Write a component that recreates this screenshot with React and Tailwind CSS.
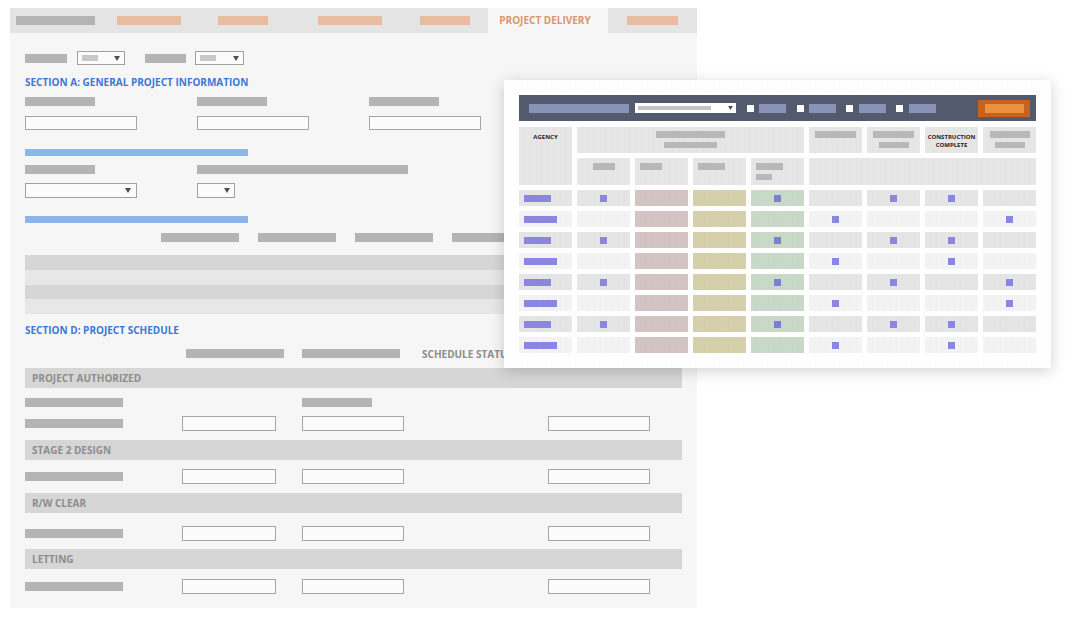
// App.jsx
const tex = "bg-[repeating-linear-gradient(90deg,transparent_0_5px,rgba(0,0,0,0.012)_5px_6px)]";

const Tri = () => (
    <svg width="6" height="5" viewBox="0 0 6 5" className="shrink-0">
        <polygon points="0,0 6,0 3,5" fill="#4b4d5a" />
    </svg>
);

const Input = ({ className = "" }) => (
    <div className={`border border-[#a6a6a6] bg-[#fbfbfb] ${className}`} />
);

const SectionRow = ({ label }) => (
    <div className="flex h-[20px] w-full items-center bg-[#d6d6d6] pl-[7px] text-[10px] font-bold text-[#8d8d8d]">
        {label}
    </div>
);

const ScheduleInputs = ({ className = "" }) => (
    <div className={`flex h-[15px] items-center ${className}`}>
        <div className="h-[9px] w-[98px] bg-[#b4b4b4]" />
        <Input className="ml-[59px] h-[15px] w-[94px]" />
        <Input className="ml-[26px] h-[15px] w-[102px]" />
        <Input className="ml-[144px] h-[15px] w-[102px]" />
    </div>
);

const marks = [
    [2, 5, 7, 8],
    [6, 9],
    [2, 5, 7, 8],
    [6, 8],
    [2, 5, 7, 9],
    [6, 9],
    [2, 5, 7, 8],
    [6, 8],
];

const cellBg = (col, odd) => {
    if (col === 3) return "bg-[#d4c3c3]";
    if (col === 4) return "bg-[#d6cfab]";
    if (col === 5) return "bg-[#c9d9c7]";
    return odd ? "bg-[#e5e5e5]" : "bg-[#f3f3f3]";
};

const DataRow = ({ cols, odd }) => (
    <>
        <div className={`flex h-[16px] items-center ${cellBg(1, odd)} ${tex}`}>
            <div className={`ml-[5px] h-[7px] bg-[#8b86e0] ${odd ? "w-[27px]" : "w-[33px]"}`} />
        </div>
        {[2, 3, 4, 5, 6, 7, 8, 9].map((c) => (
            <div key={c} className={`flex h-[16px] items-center justify-center ${cellBg(c, odd)} ${tex}`}>
                {cols.includes(c) && (
                    <div className={`h-[7px] w-[7px] ${c === 5 ? "bg-[#7d80cf]" : "bg-[#8b86e0]"}`} />
                )}
            </div>
        ))}
    </>
);

const DashboardCard = () => (
    <div className={`absolute left-[504px] top-[80px] w-[547px] bg-white px-[15px] py-[15px] shadow-[0_3px_14px_rgba(0,0,0,0.18)] ${tex}`}>
        {/* toolbar */}
        <div className="flex h-[26px] items-center bg-[#535a6e]">
            <div className="ml-[10px] h-[9px] w-[100px] bg-[#8a92b8]" />
            <div className="ml-[6px] flex h-[10px] w-[101px] items-center bg-white pr-[3px]">
                <div className="ml-[3px] h-[4px] w-[73px] bg-[#c4c4c4]" />
                <div className="ml-auto">
                    <svg width="5" height="4" viewBox="0 0 6 5">
                        <polygon points="0,0 6,0 3,5" fill="#4b4d5a" />
                    </svg>
                </div>
            </div>
            <div className="ml-[11px] h-[7px] w-[7px] bg-white" />
            <div className="ml-[5px] h-[9px] w-[27px] bg-[#8a92b8]" />
            <div className="ml-[11px] h-[7px] w-[7px] bg-white" />
            <div className="ml-[5px] h-[9px] w-[27px] bg-[#8a92b8]" />
            <div className="ml-[10px] h-[7px] w-[7px] bg-white" />
            <div className="ml-[6px] h-[9px] w-[27px] bg-[#8a92b8]" />
            <div className="ml-[10px] h-[7px] w-[7px] bg-white" />
            <div className="ml-[6px] h-[9px] w-[27px] bg-[#8a92b8]" />
            <div className="ml-auto mr-[6px] flex h-[17px] w-[52px] items-center justify-center bg-[#c8611b]">
                <div className="h-[9px] w-[39px] bg-[#ea923f]" />
            </div>
        </div>

        {/* table */}
        <div className="mt-[6px] grid grid-cols-[repeat(9,53px)] gap-[5px]">
            <div className={`row-span-2 bg-[#e6e6e6] pt-[6px] text-center text-[6px] font-bold leading-[8px] text-[#222] ${tex}`}>
                AGENCY
            </div>
            <div className={`col-span-4 flex h-[26px] flex-col items-center gap-[4px] bg-[#e6e6e6] pt-[4px] ${tex}`}>
                <div className="h-[7px] w-[69px] bg-[#b8b8b8]" />
                <div className="h-[6px] w-[53px] bg-[#b8b8b8]" />
            </div>
            <div className={`flex h-[26px] flex-col items-center bg-[#e6e6e6] pt-[4px] ${tex}`}>
                <div className="h-[7px] w-[41px] bg-[#b8b8b8]" />
            </div>
            <div className={`flex h-[26px] flex-col items-center gap-[4px] bg-[#e6e6e6] pt-[4px] ${tex}`}>
                <div className="h-[7px] w-[41px] bg-[#b8b8b8]" />
                <div className="h-[6px] w-[30px] bg-[#b8b8b8]" />
            </div>
            <div className={`h-[26px] bg-[#e6e6e6] pt-[6px] text-center text-[6px] font-bold leading-[8px] text-[#222] ${tex}`}>
                CONSTRUCTION
                <br />
                COMPLETE
            </div>
            <div className={`flex h-[26px] flex-col items-center gap-[4px] bg-[#e6e6e6] pt-[4px] ${tex}`}>
                <div className="h-[7px] w-[40px] bg-[#b8b8b8]" />
                <div className="h-[6px] w-[30px] bg-[#b8b8b8]" />
            </div>

            {/* sub header */}
            <div className={`flex h-[27px] justify-center bg-[#e6e6e6] pt-[5px] ${tex}`}>
                <div className="h-[7px] w-[22px] bg-[#b8b8b8]" />
            </div>
            <div className={`h-[27px] bg-[#e6e6e6] pl-[5px] pt-[5px] ${tex}`}>
                <div className="h-[7px] w-[22px] bg-[#b8b8b8]" />
            </div>
            <div className={`h-[27px] bg-[#e6e6e6] pl-[5px] pt-[5px] ${tex}`}>
                <div className="h-[7px] w-[27px] bg-[#b8b8b8]" />
            </div>
            <div className={`flex h-[27px] flex-col gap-[4px] bg-[#e6e6e6] pl-[5px] pt-[5px] ${tex}`}>
                <div className="h-[7px] w-[27px] bg-[#b8b8b8]" />
                <div className="h-[6px] w-[16px] bg-[#b8b8b8]" />
            </div>
            <div className={`col-span-4 h-[27px] bg-[#e6e6e6] ${tex}`} />

            {marks.map((cols, i) => (
                <DataRow key={i} cols={cols} odd={i % 2 === 0} />
            ))}
        </div>
    </div>
);

export default function App() {
    return (
        <div className="relative min-h-[625px] bg-white font-['Open_Sans',sans-serif]">
            <div className="ml-[10px] w-[687px] pt-[8px]">
                {/* tabs */}
                <div className="flex h-[25px] items-center bg-[#e4e4e4]">
                    <div className="ml-[6px] h-[9px] w-[79px] bg-[#b4b4b4]" />
                    <div className="ml-[22px] h-[9px] w-[64px] bg-[#e8bc9f]" />
                    <div className="ml-[37px] h-[9px] w-[50px] bg-[#e8bc9f]" />
                    <div className="ml-[50px] h-[9px] w-[64px] bg-[#e8bc9f]" />
                    <div className="ml-[38px] h-[9px] w-[50px] bg-[#e8bc9f]" />
                    <div className="ml-[18px] flex h-full w-[120px] items-center justify-center bg-[#f6f6f6] pr-[6px] text-[10px] font-bold text-[#d9966c]">
                        PROJECT DELIVERY
                    </div>
                    <div className="ml-[19px] h-[9px] w-[51px] bg-[#e8bc9f]" />
                </div>

                <div className="bg-[#f6f6f6] px-[15px] pb-[14px] pt-[18px]">
                    {/* filters */}
                    <div className="flex h-[14px] items-center">
                        <div className="h-[9px] w-[42px] bg-[#b4b4b4]" />
                        <div className="ml-[10px] flex h-[14px] w-[48px] items-center border border-[#a0a0a0] bg-[#fbfbfb] pr-[4px]">
                            <div className="ml-[4px] h-[6px] w-[16px] bg-[#c8c8c8]" />
                            <div className="ml-auto"><Tri /></div>
                        </div>
                        <div className="ml-[20px] h-[9px] w-[41px] bg-[#b4b4b4]" />
                        <div className="ml-[9px] flex h-[14px] w-[49px] items-center border border-[#a0a0a0] bg-[#fbfbfb] pr-[4px]">
                            <div className="ml-[4px] h-[6px] w-[16px] bg-[#c8c8c8]" />
                            <div className="ml-auto"><Tri /></div>
                        </div>
                    </div>

                    <h2 className="mt-[11px] text-[10px] font-bold leading-[12px] text-[#3b78d6]">
                        SECTION A: GENERAL PROJECT INFORMATION
                    </h2>

                    <div className="mt-[9px] grid grid-cols-[172px_172px_172px]">
                        <div className="h-[9px] w-[70px] bg-[#b4b4b4]" />
                        <div className="h-[9px] w-[70px] bg-[#b4b4b4]" />
                        <div className="h-[9px] w-[70px] bg-[#b4b4b4]" />
                    </div>
                    <div className="mt-[10px] grid grid-cols-[172px_172px_172px]">
                        <Input className="h-[14px] w-[112px]" />
                        <Input className="h-[14px] w-[112px]" />
                        <Input className="h-[14px] w-[112px]" />
                    </div>

                    <div className="mt-[19px] h-[7px] w-[223px] bg-[#8db5eb]" />

                    <div className="mt-[9px] grid grid-cols-[172px_auto]">
                        <div className="h-[9px] w-[70px] bg-[#b4b4b4]" />
                        <div className="h-[9px] w-[211px] bg-[#b4b4b4]" />
                    </div>
                    <div className="mt-[9px] grid grid-cols-[172px_auto]">
                        <div className="flex h-[15px] w-[112px] items-center justify-end border border-[#a0a0a0] bg-[#fbfbfb] pr-[5px]">
                            <Tri />
                        </div>
                        <div className="flex h-[15px] w-[38px] items-center justify-end border border-[#a0a0a0] bg-[#fbfbfb] pr-[4px]">
                            <Tri />
                        </div>
                    </div>

                    <div className="mt-[18px] h-[7px] w-[223px] bg-[#8db5eb]" />

                    <div className="mt-[10px] flex h-[9px] gap-[19px] pl-[136px]">
                        <div className="h-[9px] w-[78px] bg-[#b4b4b4]" />
                        <div className="h-[9px] w-[78px] bg-[#b4b4b4]" />
                        <div className="h-[9px] w-[78px] bg-[#b4b4b4]" />
                        <div className="h-[9px] w-[78px] bg-[#b4b4b4]" />
                    </div>

                    <div className="mt-[13px]">
                        <div className="h-[15px] bg-[#d6d6d6]" />
                        <div className="h-[15px] bg-[#e7e7e7]" />
                        <div className="h-[14px] bg-[#d6d6d6]" />
                        <div className="h-[15px] bg-[#e7e7e7]" />
                    </div>

                    <h2 className="mt-[10px] text-[10px] font-bold leading-[12px] text-[#3b78d6]">
                        SECTION D: PROJECT SCHEDULE
                    </h2>

                    <div className="mt-[13px] flex h-[9px] items-center">
                        <div className="ml-[161px] h-[9px] w-[98px] bg-[#b4b4b4]" />
                        <div className="ml-[18px] h-[9px] w-[98px] bg-[#b4b4b4]" />
                        <div className="ml-[22px] text-[10px] font-bold leading-[12px] text-[#8d8d8d]">
                            SCHEDULE STATUS
                        </div>
                    </div>

                    <div className="mt-[10px]">
                        <SectionRow label="PROJECT AUTHORIZED" />
                    </div>
                    <div className="mt-[10px] flex h-[9px]">
                        <div className="h-[9px] w-[98px] bg-[#b4b4b4]" />
                        <div className="ml-[179px] h-[9px] w-[70px] bg-[#b4b4b4]" />
                    </div>
                    <ScheduleInputs className="mt-[9px]" />

                    <div className="mt-[9px]">
                        <SectionRow label="STAGE 2 DESIGN" />
                    </div>
                    <ScheduleInputs className="mt-[9px]" />

                    <div className="mt-[9px]">
                        <SectionRow label="R/W CLEAR" />
                    </div>
                    <ScheduleInputs className="mt-[13px]" />

                    <div className="mt-[8px]">
                        <SectionRow label="LETTING" />
                    </div>
                    <ScheduleInputs className="mt-[10px]" />
                </div>
            </div>

            <DashboardCard />
        </div>
    );
}
